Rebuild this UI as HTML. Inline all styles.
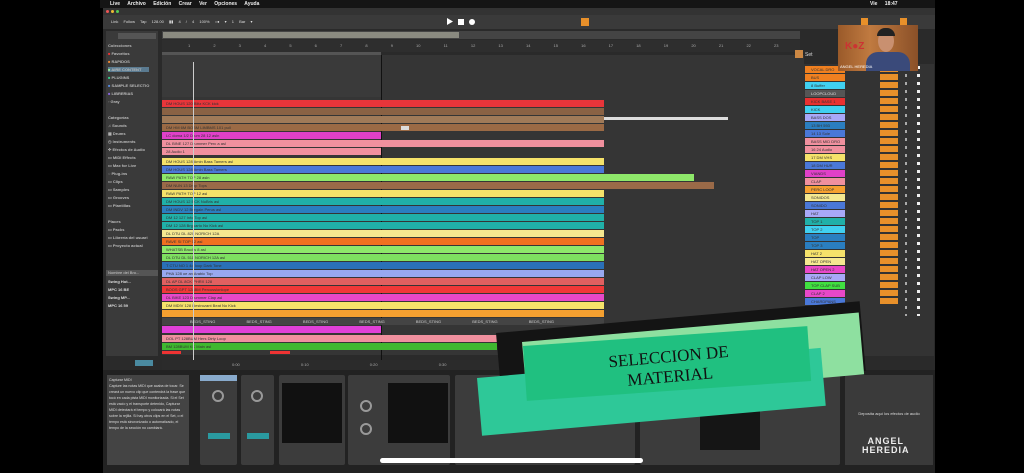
<!DOCTYPE html>
<html><head><meta charset="utf-8"><style>
*{margin:0;padding:0;box-sizing:border-box}
body{width:1024px;height:473px;background:#000;position:relative;overflow:hidden;font-family:"Liberation Sans",sans-serif;font-size:5px;color:#ccc}
.a{position:absolute}
.r{position:absolute;height:7px;left:162px;color:#333;font-size:4px;line-height:7px;padding-left:4px;white-space:nowrap;overflow:hidden}
.t{position:absolute;left:805px;width:40px;height:7px;font-size:4px;line-height:7px;color:#333;padding-left:6px}
.dev{position:absolute;top:375px;height:90px;background:#3c3c3c;border-radius:2px}
.knob{position:absolute;width:12px;height:12px;border:2px solid #999;border-radius:50%}
</style></head><body>
<div class="a" style="left:100px;top:0;width:835px;height:8px;background:#151515;font-size:5px;line-height:8px;color:#eee;font-weight:bold;padding-left:10px;word-spacing:6px">Live Archivo Edición Crear Ver Opciones Ayuda<span style="position:absolute;left:770px">Vie 18:47</span></div>
<div class="a" style="left:103px;top:8px;width:832px;height:465px;background:#2a2a2a"></div>
<div class="a" style="left:103px;top:8px;width:832px;height:7px;background:#333"></div>
<div class="a" style="left:106px;top:10px;width:3px;height:3px;border-radius:50%;background:#e55"></div>
<div class="a" style="left:111px;top:10px;width:3px;height:3px;border-radius:50%;background:#eb3"></div>
<div class="a" style="left:116px;top:10px;width:3px;height:3px;border-radius:50%;background:#5c5"></div>
<div class="a" style="left:103px;top:15px;width:832px;height:14px;background:#3a3a3a;font-size:4px;line-height:14px;padding-left:8px;color:#ddd;word-spacing:4px">Link Follow Tap 128.00 ▮▮ 4 / 4 100% ○● ▾ 1 Bar ▾</div>
<div class="a" style="left:447px;top:18px;width:6px;height:7px;background:#fff;clip-path:polygon(0 0,100% 50%,0 100%)"></div>
<div class="a" style="left:458px;top:19px;width:6px;height:6px;background:#fff"></div>
<div class="a" style="left:469px;top:19px;width:6px;height:6px;border-radius:50%;background:#fff"></div>
<div class="a" style="left:581px;top:18px;width:8px;height:8px;background:#e8902a"></div>
<div class="a" style="left:861px;top:18px;width:7px;height:7px;background:#e8902a"></div>
<div class="a" style="left:900px;top:18px;width:7px;height:7px;background:#e8902a"></div>
<div class="a" style="left:106px;top:31px;width:52px;height:325px;background:#3a3a3a"></div>
<div class="a" style="left:118px;top:33px;width:38px;height:6px;background:#555"></div>
<div class="a" style="left:108px;top:42px;font-size:4px;line-height:8px;color:#bbb;font-weight:bold">Colecciones<br><span style="color:#e33">■</span> Favoritos<br><span style="color:#e83">■</span> RAPIDOS<br><span style="background:#5a7a90;padding:0 8px 0 0"><span style="color:#9e9">■</span> AIRE CONTENT</span><br><span style="color:#3c8">■</span> PLUGINS<br><span style="color:#58d">■</span> SAMPLE SELECTIO<br><span style="color:#86d">■</span> LIBRERIAS<br>◦ Gray<br><br>Categorías<br>♫ Sounds<br>▦ Drums<br>◷ Instruments<br>✣ Efectos de Audio<br>▭ MIDI Effects<br>▭ Max for Live<br>◌ Plug-ins<br>▭ Clips<br>▭ Samples<br>▭ Grooves<br>▭ Plantillas<br><br>Places<br>▭ Packs<br>▭ Librería del usuari<br>▭ Proyecto actual</div>
<div class="a" style="left:106px;top:270px;width:52px;height:6px;background:#555;font-size:4px;line-height:6px;padding-left:2px">Nombre del Bro...</div>
<div class="a" style="left:108px;top:278px;font-size:4px;line-height:8px;color:#ddd;font-weight:bold">Swing Hot...<br>MPC 16 BE<br>Swing MP...<br>MPC 16 59</div>
<div class="a" style="left:135px;top:360px;width:18px;height:6px;background:#4a8aa0"></div>
<div class="a" style="left:162px;top:31px;width:638px;height:8px;background:#444"></div>
<div class="a" style="left:163px;top:32px;width:296px;height:6px;background:#8a8a80"></div>
<div class="a" style="left:162px;top:40px;width:638px;height:12px;background:#2e2e2e;font-size:4px;line-height:12px;color:#aaa;word-spacing:22px;padding-left:26px">1 2 3 4 5 6 7 8 9 10 11 12 13 14 15 16 17 18 19 20 21 22 23</div>
<div class="a" style="left:162px;top:52px;width:219px;height:3px;background:#555"></div>
<div class="a" style="left:162px;top:55px;width:642px;height:300px;background:#353535"></div>
<div class="a" style="left:162px;top:55px;width:219px;height:42px;background:#3a3a3a"></div>
<div class="a" style="left:381px;top:55px;width:1px;height:305px;background:#111"></div>
<div class="a" style="left:795px;top:50px;width:8px;height:8px;background:#c84"></div>
<div class="r" style="top:100px;width:442px;background:#e8353a">DM HOUS 120 Blitz KCK kick</div>
<div class="r" style="top:108px;width:442px;background:#8a6244"></div>
<div class="r" style="top:116px;width:442px;background:#a07a58"></div>
<div class="a" style="left:604px;top:117px;width:124px;height:3px;background:#ddd"></div>
<div class="r" style="top:124px;width:442px;background:#9b6a45">DM HM 6M BOBM LIMBMS 101 pull</div>
<div class="a" style="left:401px;top:126px;width:8px;height:4px;background:#ddd"></div>
<div class="r" style="top:132px;width:219px;background:#e040c8">LC doma 1/2 Drum 28 12 asln</div>
<div class="r" style="top:140px;width:442px;background:#f0909e">DL BINE 127 Drummer Perc a asl</div>
<div class="r" style="top:148px;width:219px;background:#f0909e">28 Audio 1</div>
<div class="r" style="top:158px;width:442px;background:#f5e26a">DM HOUS 128 Amin Bass Tamers asl</div>
<div class="r" style="top:166px;width:442px;background:#4a78d8">DM HOUS 128 Amin Bass Tamers</div>
<div class="r" style="top:174px;width:532px;background:#8ee86a">RAW PATH TOP 28 asln</div>
<div class="r" style="top:182px;width:552px;background:#9a6a48">DM NUN 13 Drop Tops</div>
<div class="r" style="top:190px;width:442px;background:#f5e26a">RAW PATH TOP 12 asl</div>
<div class="r" style="top:198px;width:442px;background:#20b0a8">DM HOUS 12 BCK NuBris asl</div>
<div class="r" style="top:206px;width:442px;background:#2a7ec0">DM INDV 12 Bregain Perus asl</div>
<div class="r" style="top:214px;width:442px;background:#20b0a8">DM 12 127 Info Top asl</div>
<div class="r" style="top:222px;width:442px;background:#20b0a8">DM 12 128 Brguarto No Kick asl</div>
<div class="r" style="top:230px;width:442px;background:#f5e890">DL DTU DL 820 NORICH 12A</div>
<div class="r" style="top:238px;width:442px;background:#f07020">RAVE SI TOP 02 asl</div>
<div class="r" style="top:246px;width:442px;background:#8ee86a">WHATSB Brucks 8 asl</div>
<div class="r" style="top:254px;width:442px;background:#7ee060">DL DTU DL 511 NORICH 12A asl</div>
<div class="r" style="top:262px;width:442px;background:#2a70b8">T CTU NO 1 4d loop Dark Tone</div>
<div class="r" style="top:270px;width:442px;background:#98a8f0">PHA 128 oe an Arabic Top</div>
<div class="r" style="top:278px;width:442px;background:#e06060">DL AP DL 8CK PHRX 128</div>
<div class="r" style="top:286px;width:442px;background:#f03838">BOOS GPT 128BM Percussionlope</div>
<div class="r" style="top:294px;width:442px;background:#e848c8">DL BIKE 123 Drummer Clap asl</div>
<div class="r" style="top:302px;width:442px;background:#f5e26a">DM MDIV 128 Destrozant Beat No Kick</div>
<div class="r" style="top:310px;width:442px;background:#f5a030"></div>
<div class="a" style="left:162px;top:318px;width:442px;height:7px;background:#444;font-size:4px;line-height:7px;color:#ccc;word-spacing:30px;padding-left:28px">BEDS_STING BEDS_STING BEDS_STING BEDS_STING BEDS_STING BEDS_STING BEDS_STING BEDS_STING</div>
<div class="r" style="top:326px;width:219px;background:#e040d8"></div>
<div class="r" style="top:335px;width:335px;background:#f0909e">DOL PT 128BUM Hers Dirty Loop</div>
<div class="r" style="top:343px;width:335px;background:#40b830">BM 128BUM KK Main asl</div>
<div class="a" style="left:162px;top:351px;width:19px;height:3px;background:#e33"></div>
<div class="a" style="left:270px;top:351px;width:20px;height:3px;background:#e33"></div>
<div class="a" style="left:193px;top:62px;width:1px;height:298px;background:#ccc"></div>
<div class="a" style="left:162px;top:360px;width:642px;height:10px;background:#2b2b2b;font-size:4px;line-height:10px;color:#aaa;word-spacing:60px;padding-left:70px">0:00 0:10 0:20 0:30</div>
<div class="a" style="left:805px;top:52px;font-size:5px;color:#ddd">Set</div>
<div class="a" style="left:804px;top:64px;width:130px;height:292px;background:#333"></div>
<div class="t" style="top:66px;background:#f08020">VOCAL DRO</div>
<div class="t" style="top:74px;background:#f08020">BUS</div>
<div class="t" style="top:82px;background:#40d0f0">8 Buffer</div>
<div class="t" style="top:90px;background:#555;color:#ddd">LOOPCLOUD</div>
<div class="t" style="top:98px;background:#e83030">KICK BASE 1</div>
<div class="t" style="top:106px;background:#40d0f0">KICK</div>
<div class="t" style="top:114px;background:#a8a8f8">BASS DOS</div>
<div class="t" style="top:122px;background:#2a7ec0">13 BH 593</div>
<div class="t" style="top:130px;background:#4a78d8">14 13 Sole</div>
<div class="t" style="top:138px;background:#f0909e">BASS MID DRO</div>
<div class="t" style="top:146px;background:#f0909e">16 24 Audio</div>
<div class="t" style="top:154px;background:#f5e26a">17 DM VHS</div>
<div class="t" style="top:162px;background:#4a78d8">18 DM HUR</div>
<div class="t" style="top:170px;background:#e040c8">VIANDS</div>
<div class="t" style="top:178px;background:#f0909e">CLAP</div>
<div class="t" style="top:186px;background:#f5a030">PERC LOOP</div>
<div class="t" style="top:194px;background:#f5e890">SONIDOS</div>
<div class="t" style="top:202px;background:#4a78d8">SONIDO</div>
<div class="t" style="top:210px;background:#a8a8f8">HAT</div>
<div class="t" style="top:218px;background:#20b0a8">TOP 1</div>
<div class="t" style="top:226px;background:#40d0f0">TOP 2</div>
<div class="t" style="top:234px;background:#2a7ec0">TOP</div>
<div class="t" style="top:242px;background:#2a7ec0">TOP 3</div>
<div class="t" style="top:250px;background:#f5e26a">HAT 2</div>
<div class="t" style="top:258px;background:#f5e890">HAT OPEN</div>
<div class="t" style="top:266px;background:#e848c8">HAT OPEN 2</div>
<div class="t" style="top:274px;background:#a8a8f8">CLAP LOW</div>
<div class="t" style="top:282px;background:#40e040">TOP CLAP SUB</div>
<div class="t" style="top:290px;background:#e848c8">CLAP 2</div>
<div class="t" style="top:298px;background:#4a78d8">CHARDPANS</div>
<div class="a" style="left:880px;top:66px;width:18px;height:240px;background:repeating-linear-gradient(#e8902a 0 6px,transparent 6px 8px)"></div>
<div class="a" style="left:917px;top:66px;width:3px;height:250px;background:repeating-linear-gradient(#eee 0 3px,transparent 3px 8px)"></div>
<div class="a" style="left:905px;top:66px;width:2px;height:250px;background:repeating-linear-gradient(#aaa 0 3px,transparent 3px 8px)"></div>
<div class="a" style="left:838px;top:25px;width:80px;height:46px;background:linear-gradient(90deg,#9a5a2a,#c07a40 40%,#8a5028);"></div>
<div class="a" style="left:845px;top:42px;width:40px;height:10px;color:#c33;font-size:10px;font-weight:bold;line-height:10px">K●Z</div>
<div class="a" style="left:878px;top:30px;width:16px;height:22px;border-radius:50%;background:#c99070"></div>
<div class="a" style="left:877px;top:28px;width:18px;height:8px;border-radius:8px 8px 0 0;background:#222"></div>
<div class="a" style="left:866px;top:52px;width:44px;height:19px;border-radius:12px 12px 0 0;background:#3a4a7a"></div>
<div class="a" style="left:840px;top:64px;font-size:4px;color:#fff">ANGEL HEREDIA</div>
<div class="a" style="left:103px;top:370px;width:832px;height:103px;background:#222"></div>
<div class="a" style="left:107px;top:375px;width:82px;height:90px;background:#444;font-size:3.6px;line-height:6px;color:#ddd;padding:2px">Capturar MIDI<br>Capture las notas MIDI que acaba de tocar. Se creará un nuevo clip que contendrá la frase que tocó en cada pista MIDI monitorizada. Si el Set está vacío y el transporte detenido, Capturar MIDI detectará el tempo y colocará las notas sobre la rejilla. Si hay otros clips en el Set, o el tempo está sincronizado o automatizado, el tempo de la sección no cambiará.</div>
<div class="dev" style="left:200px;width:37px"><div class="a" style="top:0;left:0;width:37px;height:6px;background:#8ac"></div><div class="knob" style="left:12px;top:15px"></div><div class="a" style="left:8px;top:58px;width:22px;height:6px;background:#2a9aa0"></div></div>
<div class="dev" style="left:241px;width:33px"><div class="knob" style="left:10px;top:15px"></div><div class="a" style="left:6px;top:58px;width:22px;height:6px;background:#2a9aa0"></div></div>
<div class="dev" style="left:279px;width:66px"><div class="a" style="left:3px;top:8px;width:60px;height:60px;background:#111"></div></div>
<div class="dev" style="left:348px;width:102px"><div class="a" style="left:40px;top:8px;width:60px;height:60px;background:#111"></div><div class="knob" style="left:12px;top:25px"></div><div class="knob" style="left:12px;top:48px"></div></div>
<div class="dev" style="left:455px;width:180px"></div>
<div class="dev" style="left:640px;width:200px"><div class="a" style="left:60px;top:25px;width:60px;height:50px;background:#151515"></div></div>
<div class="a" style="left:845px;top:375px;width:88px;height:90px;background:#3a3a3a;font-size:4px;color:#ddd;text-align:center;padding-top:36px">Deposita aquí los efectos de audio</div>
<div class="a" style="left:862px;top:437px;font-size:9px;line-height:9px;color:#eee;letter-spacing:1px;text-align:center;font-weight:bold">ANGEL<br>HEREDIA</div>
<div class="a" style="left:380px;top:458px;width:263px;height:5px;border-radius:3px;background:#fff"></div>
<!-- banner -->
<div class="a" style="left:496px;top:333px;width:365px;height:70px;background:#141414;transform:rotate(-5deg);transform-origin:0 0"></div>
<div class="a" style="left:522px;top:342px;width:338px;height:62px;background:#8ee0a0;transform:rotate(-5deg);transform-origin:0 0"></div>
<div class="a" style="left:477px;top:378px;width:345px;height:58px;background:#2ec898;transform:rotate(-5deg);transform-origin:0 0"></div>
<div class="a" style="left:523px;top:346px;width:285px;height:55px;background:#20c080;transform:rotate(-4deg);transform-origin:0 0"></div>
<div class="a" style="left:578px;top:355px;width:180px;transform:rotate(-5deg);transform-origin:0 0;font-family:'Liberation Serif',serif;font-size:17px;line-height:20px;color:#111;text-align:center">SELECCION DE<br>MATERIAL</div>
</body></html>
